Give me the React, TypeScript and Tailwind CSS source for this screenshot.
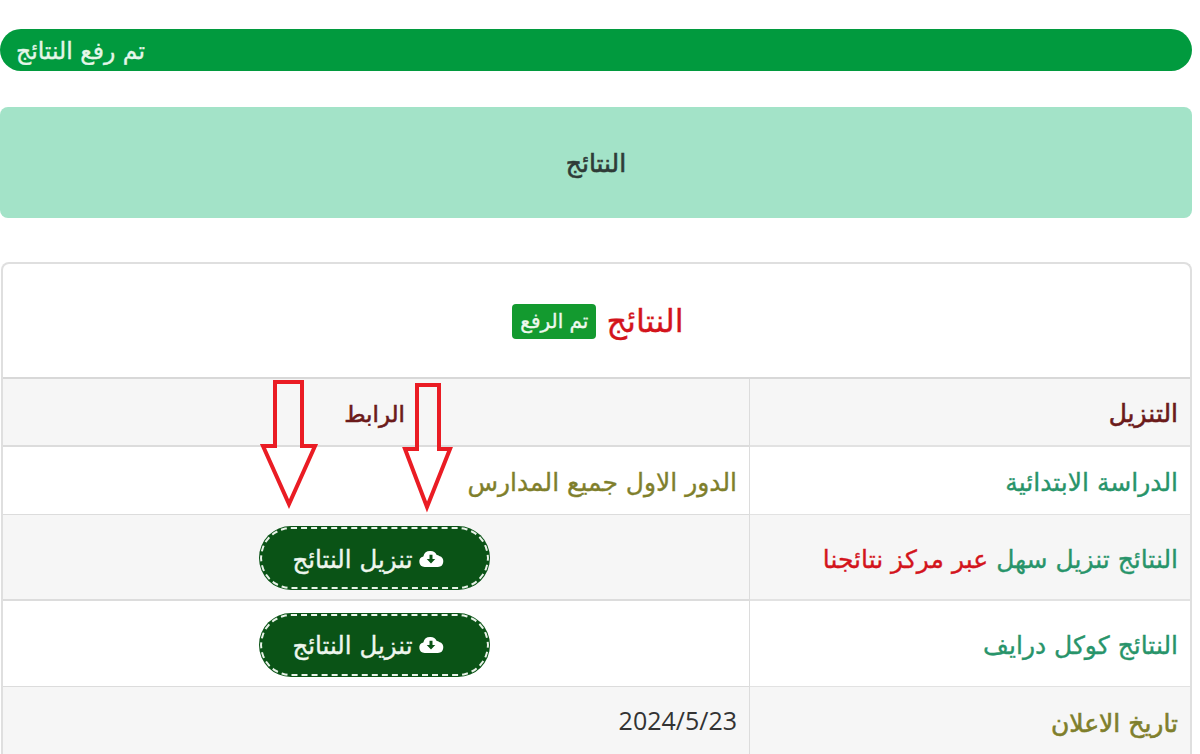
import React from "react";

function CloudDown() {
  return (
    <svg width="26" height="17" viewBox="0 0 24 16" className="shrink-0">
      <path fill="#ffffff" d="M6 16a5 5 0 0 1-1.2-9.85A6.6 6.6 0 0 1 11.5 1a6.4 6.4 0 0 1 5.9 3.7 3 3 0 0 1 2.3.9A5.3 5.3 0 0 1 18.5 16z" />
      <path fill="#0a5316" d="M10.6 4.5h2.8v4h2.6L12 12.6 8 8.5h2.6z" />
    </svg>
  );
}

function DownloadButton() {
  return (
    <div className="flex h-[64px] w-[231px] items-center justify-center gap-[5px] rounded-[32px] bg-[#0a5316] pr-[12px] outline-2 outline-dashed outline-[#e8f2e8] -outline-offset-[3px] text-[24.5px] text-[#eef6ee]">
      <CloudDown />
      <span className="pt-[4px]">تنزيل النتائج</span>
    </div>
  );
}

export default function App() {
  return (
    <div
      dir="rtl"
      className="h-[754px] w-[1200px] overflow-hidden bg-white pr-[8px] pt-[29px] [-webkit-text-stroke:0.35px]"
      style={{ fontFamily: '"DejaVu Sans", "Noto Sans", sans-serif' }}
    >
      <div className="flex h-[42px] items-center rounded-[21px] bg-[#019a3e] pl-[16px] pt-[3px] text-[23.5px] text-[#e6f6ea]" dir="ltr">
        <span dir="rtl">تم رفع النتائج</span>
      </div>

      <div className="mt-[36px] flex h-[111px] items-center justify-center rounded-[8px] bg-[#a3e3c8] pt-[3px] text-[25px] text-[#2f3b37] [-webkit-text-stroke:0.6px]">
        النتائج
      </div>

      <div className="relative ml-[1px] mt-[44px] h-[600px] rounded-t-[8px] border-2 border-b-0 border-[#dfdfdf]">
        <div className="flex h-[115px] items-center justify-center gap-[10px] border-b-2 border-[#d8d8d8] pl-[3px]">
          <span className="text-[32px] text-[#d3141c]">النتائج</span>
          <span className="mt-[1px] flex h-[35px] items-center rounded-[4px] bg-[#139a2f] px-[8px] text-[20px] text-[#eef8ee]">تم الرفع</span>
        </div>

        <div className="grid grid-cols-[440px_1fr] grid-rows-[68px_68px_86px_86px_68px] text-[25px]">
          <div className="flex items-center border-b-2 border-[#e2e2e2] bg-[#f6f6f6] pr-[12px] pt-[4px] text-[#6b1a1a] [-webkit-text-stroke:0.6px]">التنزيل</div>
          <div className="flex items-center border-b-2 border-r border-[#dcdcdc] bg-[#f6f6f6] pr-[344px] pt-[4px] text-[23px] text-[#6b1a1a] [-webkit-text-stroke:0.6px]">الرابط</div>

          <div className="flex items-center border-b border-[#e2e2e2] pr-[12px] pt-[4px] text-[#28946a]">الدراسة الابتدائية</div>
          <div className="flex items-center border-b border-r border-[#dcdcdc] pr-[12px] pt-[4px] text-[#7f7f2c]">الدور الاول جميع المدارس</div>

          <div className="flex items-center border-b-2 border-[#e2e2e2] bg-[#f6f6f6] pr-[12px] pt-[6px] whitespace-nowrap text-[#28946a]">
            <span>النتائج تنزيل سهل&nbsp;</span>
            <span className="text-[#d3141c]">عبر مركز نتائجنا</span>
          </div>
          <div className="flex items-center justify-center border-b-2 border-r border-[#dcdcdc] bg-[#f6f6f6] pt-[2px] pr-[4px]">
            <DownloadButton />
          </div>

          <div className="flex items-center border-b border-[#e2e2e2] pr-[12px] pt-[4px] text-[#28946a]">النتائج كوكل درايف</div>
          <div className="flex items-center justify-center border-b border-r border-[#dcdcdc] pt-[2px] pr-[4px]">
            <DownloadButton />
          </div>

          <div className="flex items-center bg-[#f6f6f6] pr-[12px] pt-[6px] text-[#7f7f2c] [-webkit-text-stroke:0.6px]">تاريخ الاعلان</div>
          <div className="flex items-center border-r border-[#dcdcdc] bg-[#f6f6f6] pr-[12px] text-[25px] text-[#333333] [-webkit-text-stroke:0px]" style={{ fontFamily: '"Open Sans", sans-serif' }}>2024/5/23</div>
        </div>

        <svg width="60" height="134" viewBox="0 0 60 134" className="absolute left-[256px] top-[114px]">
          <path d="M16 4H43V68H56L30 126L4 68H16Z" fill="none" stroke="#ea1c24" strokeWidth="4" />
        </svg>
        <svg width="53" height="136" viewBox="0 0 53 136" className="absolute left-[398px] top-[117px]">
          <path d="M16 4H38V68H49L26 126L4 68H16Z" fill="none" stroke="#ea1c24" strokeWidth="4" />
        </svg>
      </div>
    </div>
  );
}
